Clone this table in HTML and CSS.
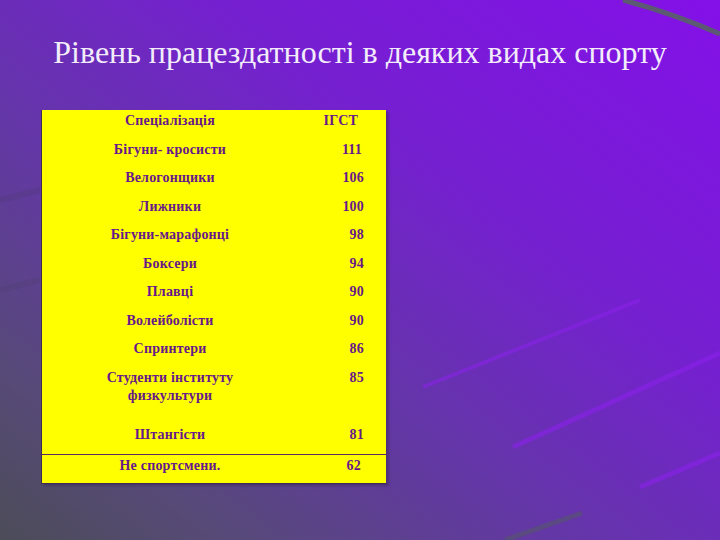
FILE: index.html
```html
<!DOCTYPE html>
<html lang="uk">
<head>
<meta charset="utf-8">
<title>Рівень працездатності</title>
<link rel="stylesheet" href="styles.css">
</head>
<body>
<div class="slide">
  <svg class="deco" width="720" height="540" viewBox="0 0 720 540" aria-hidden="true">
    <path d="M623 0 Q675 14 720 34" stroke="#5c5a72" stroke-width="5" fill="none"/>
    <path d="M423 387 L640 300" stroke="#8a22ea" stroke-width="4" fill="none" opacity="0.55"/>
    <path d="M513 447 L720 353" stroke="#8a22ea" stroke-width="5" fill="none" opacity="0.6"/>
    <path d="M640 487 L720 453" stroke="#8a22ea" stroke-width="5" fill="none" opacity="0.6"/>
    <path d="M505 540 L582 513" stroke="#55566a" stroke-width="5" fill="none" opacity="0.6"/>
    <path d="M0 200 L40 190" stroke="#4f3a78" stroke-width="6" fill="none" opacity="0.35"/>
    <path d="M0 290 L40 280" stroke="#4f4070" stroke-width="6" fill="none" opacity="0.3"/>
  </svg>
  <div class="content">
    <h1 class="title">Рівень працездатності в деяких видах спорту</h1>
    <div class="table">
      <div class="row"><div class="c1">Спеціалізація</div><div class="c2 head">ІГСТ</div></div>
      <div class="row"><div class="c1">Бігуни- кросисти</div><div class="c2 n111">111</div></div>
      <div class="row"><div class="c1">Велогонщики</div><div class="c2">106</div></div>
      <div class="row"><div class="c1">Лижники</div><div class="c2">100</div></div>
      <div class="row"><div class="c1">Бігуни-марафонці</div><div class="c2">98</div></div>
      <div class="row"><div class="c1">Боксери</div><div class="c2">94</div></div>
      <div class="row"><div class="c1">Плавці</div><div class="c2">90</div></div>
      <div class="row"><div class="c1">Волейболісти</div><div class="c2">90</div></div>
      <div class="row"><div class="c1">Спринтери</div><div class="c2">86</div></div>
      <div class="row tall"><div class="c1">Студенти інституту<br>физкультури</div><div class="c2">85</div></div>
      <div class="row mid"><div class="c1">Штангісти</div><div class="c2">81</div></div>
      <div class="row last"><div class="c1">Не спортсмени.</div><div class="c2 n62">62</div></div>
    </div>
  </div>
</div>
</body>
</html>
```
FILE: styles.css
```css
html, body {
  margin: 0;
  padding: 0;
}
body {
  width: 720px;
  height: 540px;
  overflow: hidden;
}
.slide {
  position: relative;
  width: 720px;
  height: 540px;
  overflow: hidden;
  background: linear-gradient(to top right, #4c4c58 0%, #574a78 16%, #6436a8 40%, #7520d0 65%, #8410e8 100%);
}
.deco {
  position: absolute;
  left: 0;
  top: 0;
}
.content {
  position: relative;
  display: flex;
  flex-direction: column;
}
.title {
  margin: 35px 0 0 0;
  height: 34px;
  line-height: 34px;
  text-align: center;
  font-family: "Liberation Serif", serif;
  font-weight: normal;
  font-size: 32px;
  color: #f3ecfa;
}
.table {
  margin: 41px 0 0 41px;
  width: 344px;
  background: #ffff00;
  border-left: 1px solid #3c2c55;
  border-bottom: 1px solid #3c2c55;
  box-shadow: 3px 2px 2px rgba(60, 40, 90, 0.5);
  font-family: "Liberation Serif", serif;
  font-weight: bold;
  font-size: 14px;
  letter-spacing: 0.2px;
  color: #681889;
}
.row {
  display: flex;
  height: 28.5px;
  box-sizing: border-box;
  padding-top: 2px;
  line-height: 18px;
}
.row.tall {
  height: 57.5px;
}
.row.mid {
  height: 30px;
}
.row.last {
  height: 29px;
  border-top: 1px solid #5a2a62;
  margin-left: -2px;
  padding-left: 2px;
}
.c1 {
  width: 256px;
  text-align: center;
}
.c2 {
  width: 88px;
  box-sizing: border-box;
  text-align: right;
  padding-right: 22px;
}
.c2.head {
  padding-right: 28px;
}
.c2.n111 {
  padding-right: 24px;
}
.c2.n62 {
  padding-right: 25px;
}
```
